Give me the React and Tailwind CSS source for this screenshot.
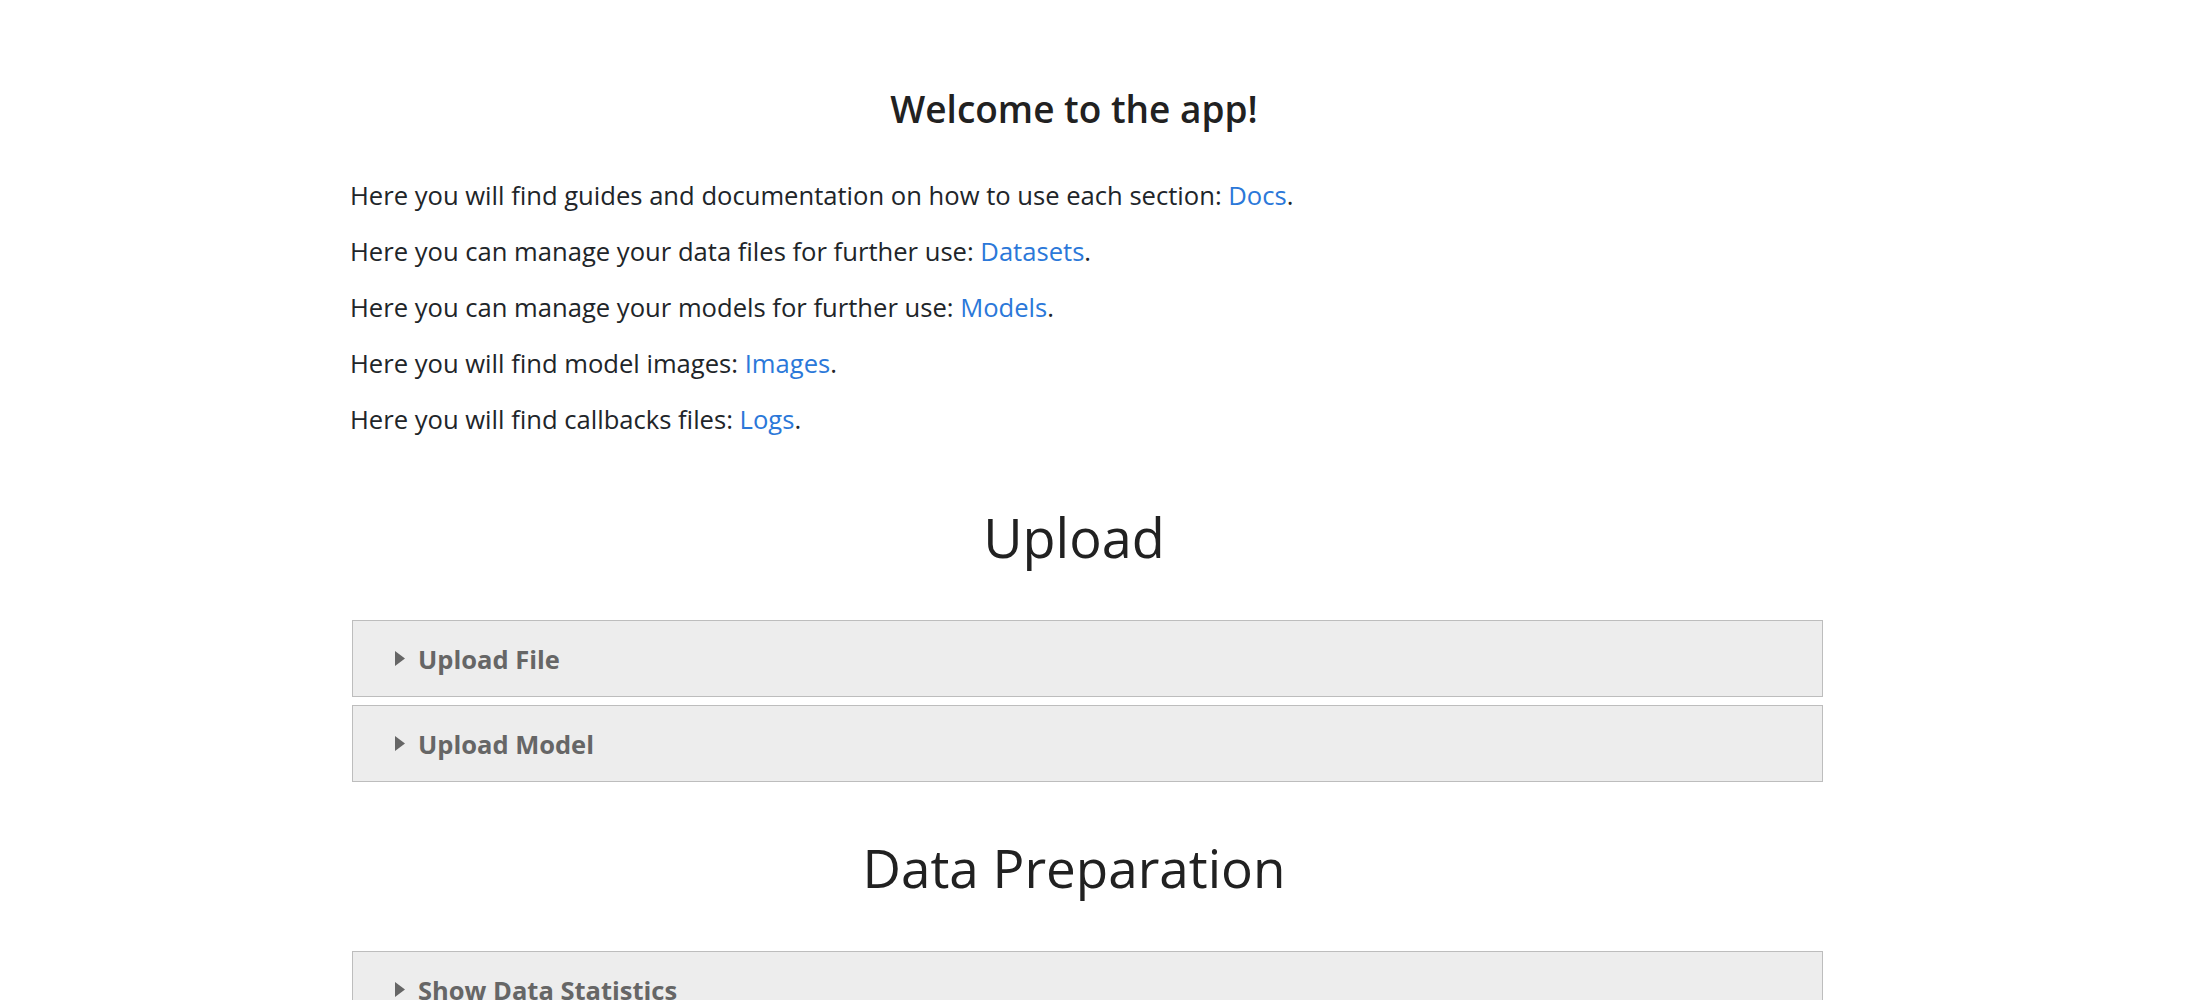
import React from "react";

const links = [
  { text: "Here you will find guides and documentation on how to use each section: ", link: "Docs" },
  { text: "Here you can manage your data files for further use: ", link: "Datasets" },
  { text: "Here you can manage your models for further use: ", link: "Models" },
  { text: "Here you will find model images: ", link: "Images" },
  { text: "Here you will find callbacks files: ", link: "Logs" },
];

function Caret() {
  return (
    <svg width="10" height="15" viewBox="0 0 10 15" className="shrink-0">
      <path d="M0 0 L10 7.5 L0 15 Z" fill="#666666" />
    </svg>
  );
}

function Section({ title }) {
  return (
    <div className="ml-[2px] w-[1471px] h-[77px] mb-[8px] bg-[#ededed] border border-[#bdbdbd] flex items-center pl-[42px]">
      <Caret />
      <span className="ml-[13px] text-[25.5px] leading-[36px] font-bold text-[#666666]">{title}</span>
    </div>
  );
}

export default function App() {
  return (
    <div className="min-h-screen bg-white text-[#212529] font-['Open_Sans',sans-serif]">
      <div className="ml-[350px] w-[1478px] pt-[86px]">
        {/* Intro */}
        <h3 className="w-[1448px] text-center text-[37px] leading-[46px] font-semibold text-[#212121]">
          Welcome to the app!
        </h3>
        <div className="mt-[46px]">
          {links.map((l) => (
            <p key={l.link} className="text-[25.6px] leading-[36px] mb-[20px]">
              {l.text}
              <a href="#" className="text-[#2b78d9]">{l.link}</a>.
            </p>
          ))}
        </div>

        {/* Upload */}
        <h1 className="w-[1448px] text-center text-[54px] leading-[70px] font-medium mt-[64px] mb-[48px] text-[#212121]">
          Upload
        </h1>
        <Section title="Upload File" />
        <Section title="Upload Model" />

        {/* Data Preparation */}
        <h1 className="w-[1448px] text-center text-[53px] leading-[70px] font-medium mt-[51px] mb-[48px] text-[#212121]">
          Data Preparation
        </h1>
        <Section title="Show Data Statistics" />
      </div>
    </div>
  );
}
